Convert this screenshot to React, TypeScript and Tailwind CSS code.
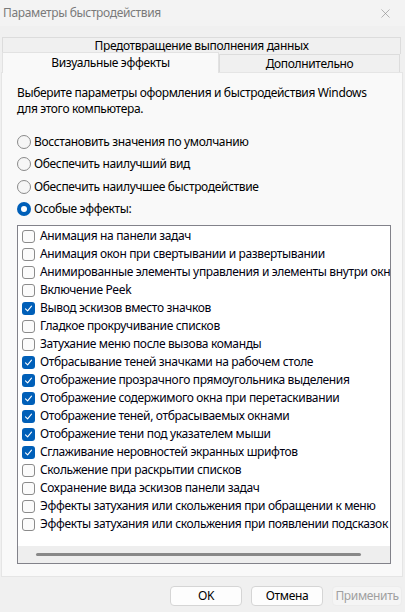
import { X } from 'lucide-react';

const effects: { label: string; checked: boolean }[] = [
  { label: 'Анимация на панели задач', checked: false },
  { label: 'Анимация окон при свертывании и развертывании', checked: false },
  { label: 'Анимированные элементы управления и элементы внутри окна', checked: false },
  { label: 'Включение Peek', checked: false },
  { label: 'Вывод эскизов вместо значков', checked: true },
  { label: 'Гладкое прокручивание списков', checked: false },
  { label: 'Затухание меню после вызова команды', checked: false },
  { label: 'Отбрасывание теней значками на рабочем столе', checked: true },
  { label: 'Отображение прозрачного прямоугольника выделения', checked: true },
  { label: 'Отображение содержимого окна при перетаскивании', checked: true },
  { label: 'Отображение теней, отбрасываемых окнами', checked: true },
  { label: 'Отображение тени под указателем мыши', checked: true },
  { label: 'Сглаживание неровностей экранных шрифтов', checked: true },
  { label: 'Скольжение при раскрытии списков', checked: false },
  { label: 'Сохранение вида эскизов панели задач', checked: false },
  { label: 'Эффекты затухания или скольжения при обращении к меню', checked: false },
  { label: 'Эффекты затухания или скольжения при появлении подсказок', checked: false },
];

const radios = [
  { label: 'Восстановить значения по умолчанию', checked: false },
  { label: 'Обеспечить наилучший вид', checked: false },
  { label: 'Обеспечить наилучшее быстродействие', checked: false },
  { label: 'Особые эффекты:', checked: true },
];

function Radio({ checked }: { checked: boolean }) {
  if (checked) {
    return (
      <span className="w-[14px] h-[14px] rounded-full bg-[#005fb8] flex items-center justify-center shrink-0">
        <span className="w-[6px] h-[6px] rounded-full bg-white" />
      </span>
    );
  }
  return <span className="w-[14px] h-[14px] rounded-full border border-[#8a8a8a] bg-[#f6f6f6] shrink-0" />;
}

function Check({ checked }: { checked: boolean }) {
  if (checked) {
    return (
      <span className="w-[13px] h-[13px] rounded-[3px] bg-[#005fb8] flex items-center justify-center shrink-0">
        <svg width="9" height="9" viewBox="0 0 9 9" fill="none">
          <path d="M1.5 4.8 L3.6 6.8 L7.5 2.2" stroke="white" strokeWidth="1.1" strokeLinecap="round" strokeLinejoin="round" />
        </svg>
      </span>
    );
  }
  return <span className="w-[13px] h-[13px] rounded-[3px] border border-[#8b8b8b] bg-[#fbfbfb] shrink-0" />;
}

export default function App() {
  return (
    <div
      className="w-[405px] h-[612px] bg-[#f0f0f0] flex flex-col overflow-hidden text-[12px] tracking-[-0.35px] text-black"
      style={{ fontFamily: '"Segoe UI", "Noto Sans", sans-serif' }}
    >
      {/* Title bar */}
      <div className="h-[26px] flex items-center justify-between pl-[3px] pr-[12px] bg-[#f3f3f3]">
        <span className="text-[#7a7a7a] text-[12px]">Параметры быстродействия</span>
        <X size={15} strokeWidth={1} className="text-[#8a8a8a]" />
      </div>

      {/* Tabs */}
      <div className="mt-[11px] px-[2px] flex flex-col">
        <div className="h-[17px] mr-[2px] border border-b-0 border-[#dcdcdc] bg-[#f0f0f0] flex items-center justify-center leading-none">
          Предотвращение выполнения данных
        </div>
        <div className="flex h-[20px] -mt-[2px] relative z-10">
          <div className="w-[217px] h-[21px] bg-[#f9f9f9] border border-b-0 border-[#e2e2e2] flex items-center justify-center leading-none">
            Визуальные эффекты
          </div>
          <div className="w-[181px] mt-[2px] h-[18px] bg-[#f0f0f0] border border-b-0 border-[#dcdcdc] flex items-center justify-center leading-none">
            Дополнительно
          </div>
        </div>
      </div>

      {/* Panel */}
      <div className="ml-[1px] w-[402px] h-[505px] bg-[#f9f9f9] border border-[#e5e5e5] px-[15px] pt-[12px] flex flex-col">
        <p className="leading-[16px]">
          Выберите параметры оформления и быстродействия Windows
          <br />
          для этого компьютера.
        </p>

        <div className="mt-[14px] flex flex-col">
          {radios.map(r => (
            <div key={r.label} className="h-[22.3px] flex items-center gap-[3px]">
              <Radio checked={r.checked} />
              <span>{r.label}</span>
            </div>
          ))}
        </div>

        {/* List box */}
        <div className="mt-[5px] w-[374px] h-[339px] border border-[#82828a] bg-white flex flex-col">
          <div className="flex-1 overflow-hidden pt-[1px]">
            {effects.map(e => (
              <div key={e.label} className="h-[18px] flex items-center pl-[4px] gap-[5px] whitespace-nowrap">
                <Check checked={e.checked} />
                <span className="text-[#000010]">{e.label}</span>
              </div>
            ))}
          </div>
          <div className="h-[17px] bg-[#eeeeee] flex items-center pl-[18px]">
            <div className="w-[325px] h-[3px] rounded-full bg-[#888888]" />
          </div>
        </div>
      </div>

      {/* Buttons */}
      <div className="mt-[9px] flex justify-end gap-[9px] pr-[3px]">
        <button className="w-[72px] h-[20px] rounded-[4px] border border-[#d5d5d5] bg-[#fdfdfd] leading-none">OK</button>
        <button className="w-[72px] h-[20px] rounded-[4px] border border-[#d5d5d5] bg-[#fdfdfd] leading-none">Отмена</button>
        <button className="w-[70px] h-[20px] rounded-[4px] border border-[#ececec] bg-[#f5f5f5] text-[#a0a0a0] leading-none">Применить</button>
      </div>
    </div>
  );
}
